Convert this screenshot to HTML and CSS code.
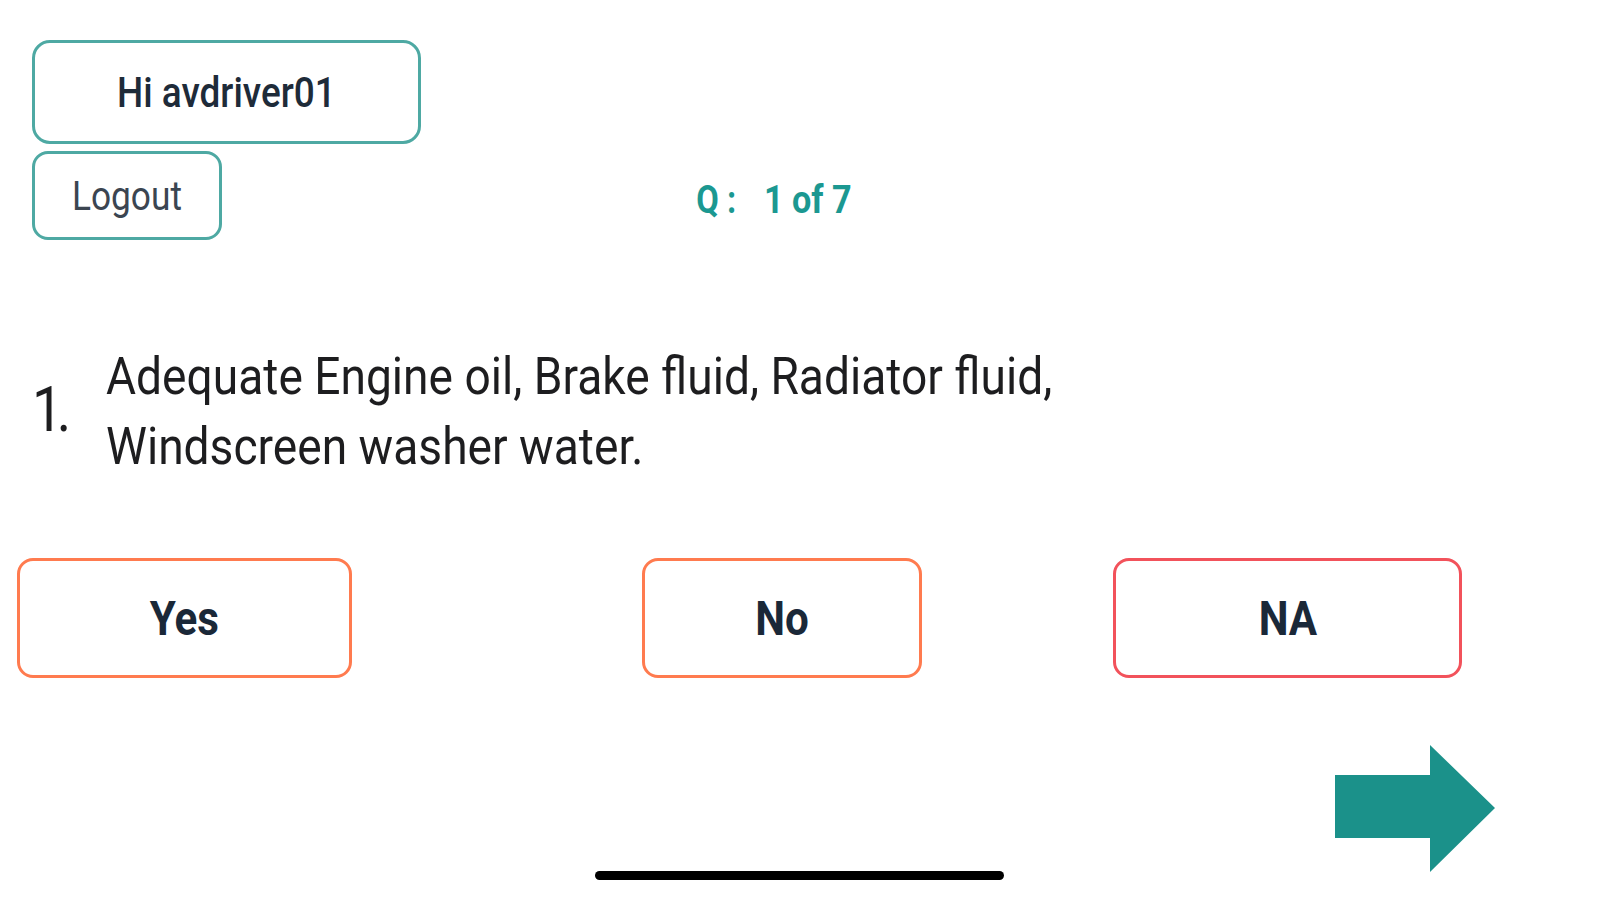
FILE: index.html
```html
<!DOCTYPE html>
<html lang="en">
<head>
<meta charset="utf-8">
<title>Checklist</title>
<link rel="stylesheet" href="styles.css">
</head>
<body>
<div class="screen">
  <header class="top">
    <div class="greet"><span class="sq">Hi avdriver01</span></div>
    <div class="row2">
      <button class="logout"><span class="sq">Logout</span></button>
      <div class="qcount"><span class="sq">Q :</span><span class="sq num">1 of 7</span></div>
    </div>
  </header>

  <section class="question">
    <div class="qnum"><span class="sql"><span class="digit">1</span>.</span></div>
    <p class="qtext"><span class="sql wide">Adequate Engine oil, Brake fluid, Radiator fluid,<br>Windscreen washer water.</span></p>
  </section>

  <div class="answers">
    <button class="ans ans-yes"><span class="sq">Yes</span></button>
    <button class="ans ans-no"><span class="sq">No</span></button>
    <button class="ans ans-na"><span class="sq">NA</span></button>
  </div>

  <div class="nav">
    <svg class="next" width="160" height="127" viewBox="0 0 160 127" aria-label="Next">
      <polygon points="0,30 95,30 95,0 160,63 95,127 95,93 0,93" fill="#1b918a"/>
    </svg>
  </div>
</div>
<div class="home-bar"></div>
</body>
</html>
```

FILE: styles.css
```css
html, body {
  margin: 0;
  padding: 0;
  background: #ffffff;
}

body {
  font-family: Roboto, "Liberation Sans", Arial, sans-serif;
  color: #1e2a36;
  width: 1599px;
  height: 900px;
  overflow: hidden;
}

.screen {
  padding-top: 40px;
}

.sq {
  display: inline-block;
  transform: scaleX(0.86);
  white-space: nowrap;
}

.sql {
  display: inline-block;
  transform: scaleX(0.87);
  transform-origin: left center;
  white-space: nowrap;
}

.sql.wide {
  transform: scaleX(0.887);
}

.top {
  padding-left: 32px;
}

.greet {
  box-sizing: border-box;
  width: 389px;
  height: 104px;
  border: 3px solid #4ea9a3;
  border-radius: 18px;
  display: flex;
  align-items: center;
  justify-content: center;
  font-size: 42px;
  font-weight: 500;
  color: #1e2b39;
}

.greet .sq {
  transform: scaleX(0.88);
}

.row2 {
  margin-top: 7px;
  display: flex;
  align-items: center;
}

.logout {
  box-sizing: border-box;
  width: 190px;
  height: 89px;
  border: 3px solid #4ea9a3;
  border-radius: 16px;
  background: #ffffff;
  font-family: inherit;
  font-size: 41px;
  font-weight: 400;
  color: #3b4551;
  padding: 0;
  display: flex;
  align-items: center;
  justify-content: center;
}

.qcount {
  margin-left: 471px;
  margin-top: 9px;
  display: flex;
  gap: 20px;
  font-size: 38px;
  font-weight: 700;
  color: #1b9891;
}

.qcount .num {
  transform: scaleX(0.9);
}

.question {
  margin-top: 102px;
  display: flex;
  align-items: flex-start;
  padding-left: 30px;
  color: #1d1d1f;
}

.qnum {
  width: 74px;
  margin-left: 2px;
  flex: none;
  font-size: 63px;
  line-height: 1;
  margin-top: 36px;
}

.digit {
  letter-spacing: -7px;
}

.qtext {
  margin: 0;
  font-size: 52px;
  line-height: 70px;
}

.answers {
  margin-top: 76px;
  display: flex;
  padding-left: 17px;
}

.ans {
  box-sizing: border-box;
  height: 120px;
  border: 3px solid #ff7b4f;
  border-radius: 16px;
  background: #ffffff;
  font-family: inherit;
  font-size: 49px;
  font-weight: 700;
  color: #1a2838;
  padding: 0;
  display: flex;
  align-items: center;
  justify-content: center;
}

.ans-yes {
  width: 335px;
}

.ans-no {
  width: 280px;
  margin-left: 290px;
}

.ans-na {
  width: 349px;
  margin-left: 191px;
  border-color: #f2525b;
}

.nav {
  margin-top: 67px;
  display: flex;
  justify-content: flex-end;
  padding-right: 104px;
}

.next {
  display: block;
}

.home-bar {
  position: fixed;
  left: 595px;
  bottom: 20px;
  width: 409px;
  height: 9px;
  border-radius: 5px;
  background: #000000;
}
```
